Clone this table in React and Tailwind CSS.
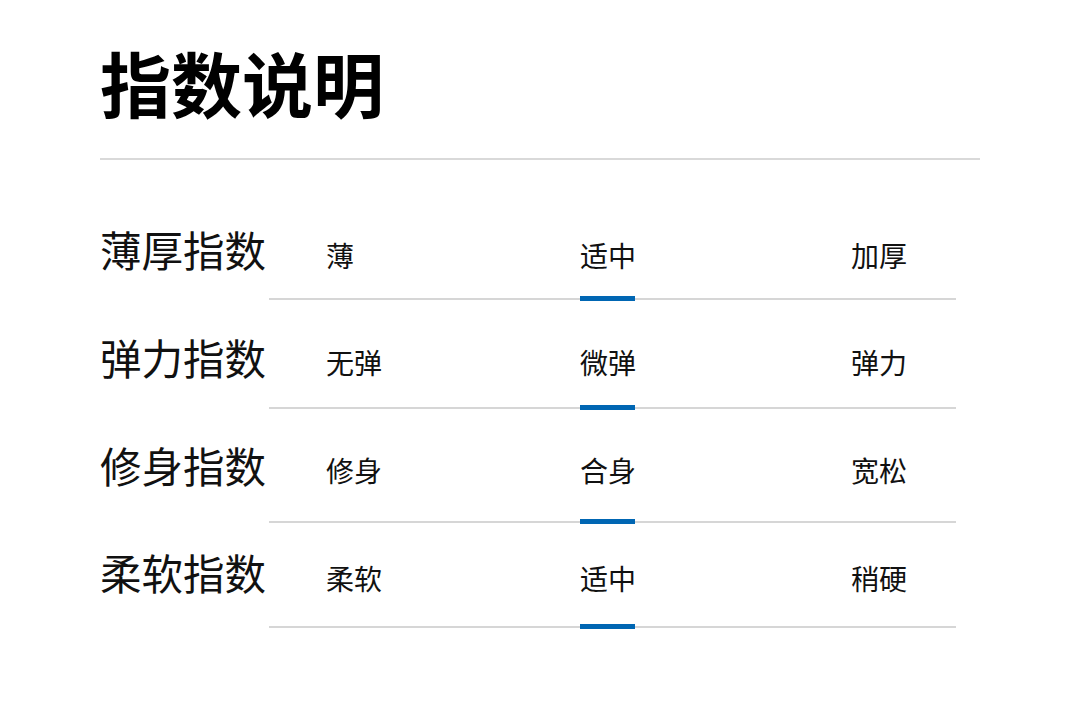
const rows = [
  { label: "薄厚指数", opts: ["薄", "适中", "加厚"], h: "h-[140px]", lp: "pt-[69px]", op: "pt-[81px]" },
  { label: "弹力指数", opts: ["无弹", "微弹", "弹力"], h: "h-[109px]", lp: "pt-[37px]", op: "pt-[48px]" },
  { label: "修身指数", opts: ["修身", "合身", "宽松"], h: "h-[114px]", lp: "pt-[36px]", op: "pt-[47px]" },
  { label: "柔软指数", opts: ["柔软", "适中", "稍硬"], h: "h-[105px]", lp: "pt-[29px]", op: "pt-[41px]" },
];

const IndexRow = ({ row }) => (
  <div className={`flex ${row.h}`}>
    <div className={`w-[169px] shrink-0 text-[41.5px] leading-none text-[#111] ${row.lp}`}>
      {row.label}
    </div>
    <div className="relative flex-1 mr-[24px] border-b-2 border-[#d6d6d6]">
      <div className={`flex pl-[57px] text-[28px] leading-none text-[#111] whitespace-nowrap ${row.op}`}>
        <div className="w-[254px] shrink-0">{row.opts[0]}</div>
        <div className="w-[271px] shrink-0">{row.opts[1]}</div>
        <div className="shrink-0">{row.opts[2]}</div>
      </div>
      <div className="absolute left-[311px] -bottom-[3px] w-[55px] h-[5px] bg-[#0066b3]" />
    </div>
  </div>
);

export default function App() {
  return (
    <div
      className="w-[1080px] h-[725px] bg-white px-[100px]"
      style={{ fontFamily: '"Noto Sans CJK SC", "Noto Sans", sans-serif' }}
    >
      <div className="pt-[46px] pb-[41px] text-[71px] font-bold leading-none text-black">
        指数说明
      </div>
      <div className="h-[2px] bg-[#d9d9d9]" />
      {rows.map((row, i) => (
        <IndexRow key={i} row={row} />
      ))}
    </div>
  );
}
